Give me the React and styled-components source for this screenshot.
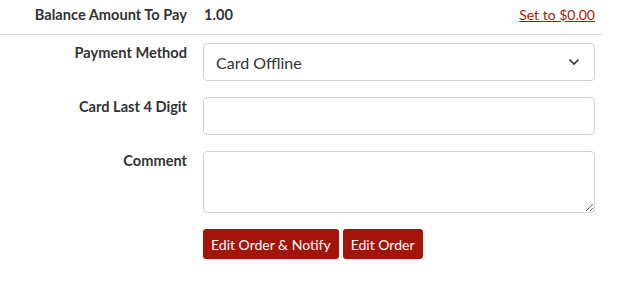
import React from "react";
import styled, { createGlobalStyle } from "styled-components";

const Global = createGlobalStyle`
  body { margin: 0; background: #fff; font-family: Lato, "Noto Sans", sans-serif; color: #333; }
`;

const Wrap = styled.div`
  width: 603px;
`;

const TopRow = styled.div`
  box-sizing: border-box;
  display: grid;
  grid-template-columns: 187px 1fr auto;
  column-gap: 17px;
  align-items: start;
  height: 35px;
  padding: 5px 8px 0 0;
  border-bottom: 1px solid #dcdcdc;
`;

const Label = styled.div`
  text-align: right;
  font-weight: 700;
  font-size: 14.6px;
  line-height: 20px;
  color: #333;
`;

const Value = styled.div`
  font-weight: 700;
  font-size: 14.6px;
  line-height: 20px;
  color: #333;
`;

const Link = styled.a`
  font-size: 14px;
  line-height: 20px;
  color: #a3170c;
  text-decoration: underline;
  cursor: pointer;
`;

const Form = styled.div`
  display: flex;
  flex-direction: column;
  gap: 16px;
  padding-top: 8px;
`;

const Row = styled.div`
  display: grid;
  grid-template-columns: 187px 392px;
  column-gap: 16px;
  align-items: start;
`;

const SelectBox = styled.div`
  box-sizing: border-box;
  height: 38px;
  border: 1px solid #cfd2d6;
  border-radius: 4px;
  display: flex;
  align-items: center;
  justify-content: space-between;
  padding: 0 14px 0 12px;
  font-size: 16px;
  color: #333;
`;

const Input = styled.input`
  box-sizing: border-box;
  height: 38px;
  width: 100%;
  border: 1px solid #cfd2d6;
  border-radius: 4px;
  font-family: inherit;
  font-size: 16px;
  outline: none;
`;

const Area = styled.textarea`
  box-sizing: border-box;
  height: 62px;
  width: 100%;
  border: 1px solid #cfd2d6;
  border-radius: 4px;
  font-family: inherit;
  font-size: 16px;
  outline: none;
  display: block;
`;

const Buttons = styled.div`
  display: flex;
  gap: 4px;
`;

const Button = styled.button`
  height: 30px;
  padding: 0 8px;
  border: none;
  border-radius: 3px;
  background: #a3150a;
  color: #fff;
  font-family: inherit;
  font-size: 14px;
  cursor: pointer;
`;

const Chevron = () => (
  <svg width="12" height="8" viewBox="0 0 12 8">
    <path d="M1.5 1.5 L6 6 L10.5 1.5" fill="none" stroke="#333" strokeWidth="1.6" />
  </svg>
);

export default function App() {
  return (
    <Wrap>
      <Global />
      <TopRow>
        <Label>Balance Amount To Pay</Label>
        <Value>1.00</Value>
        <Link>Set to $0.00</Link>
      </TopRow>
      <Form>
        <Row>
          <Label>Payment Method</Label>
          <SelectBox>
            <span>Card Offline</span>
            <Chevron />
          </SelectBox>
        </Row>
        <Row>
          <Label>Card Last 4 Digit</Label>
          <Input />
        </Row>
        <Row>
          <Label>Comment</Label>
          <Area />
        </Row>
        <Row>
          <div />
          <Buttons>
            <Button>Edit Order &amp; Notify</Button>
            <Button>Edit Order</Button>
          </Buttons>
        </Row>
      </Form>
    </Wrap>
  );
}
